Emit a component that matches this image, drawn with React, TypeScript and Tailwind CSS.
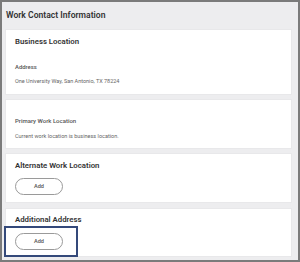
export default function App() {
  const font = { fontFamily: 'Roboto, "Liberation Sans", sans-serif' };

  return (
    <div
      className="w-[300px] h-[262px] border-2 border-[#7b7b7b] bg-[#ededef] flex flex-col overflow-hidden"
      style={font}
    >
      {/* Header */}
      <div className="h-[27px] flex items-center pl-[4px] text-[8.6px] font-semibold text-[#333]">
        Work Contact Information
      </div>

      <div className="flex flex-col pl-[3px] pr-[6px]">
        {/* Business Location */}
        <div className="h-[66px] bg-white border border-[#e8e8ea] pl-[9px] pt-[7px]">
          <div className="text-[7.8px] leading-[10px] font-semibold text-[#333]">Business Location</div>
          <div className="mt-[16px] text-[5.9px] leading-[8px] font-medium text-[#555]">Address</div>
          <div className="mt-[6px] text-[5.5px] leading-[8px] text-[#666]">
            One University Way, San Antonio, TX 78224
          </div>
        </div>

        {/* Primary Work Location */}
        <div className="mt-[4px] h-[50px] bg-white border border-[#e8e8ea] pl-[9px] pt-[17px]">
          <div className="text-[6px] leading-[8px] font-medium text-[#555]">Primary Work Location</div>
          <div className="mt-[7px] text-[5.5px] leading-[8px] text-[#666]">
            Current work location is business location.
          </div>
        </div>

        {/* Alternate Work Location */}
        <div className="mt-[4px] h-[50px] bg-white border border-[#e8e8ea] pl-[9px] pt-[7px]">
          <div className="text-[7.8px] leading-[10px] font-semibold text-[#333]">Alternate Work Location</div>
          <button className="mt-[7px] w-[48px] h-[17px] rounded-full border border-[#9a9a9a] bg-white text-[5.6px] font-medium text-[#555] flex items-center justify-center">
            Add
          </button>
        </div>

        {/* Additional Address */}
        <div className="relative mt-[5px] h-[49px] bg-white border border-[#e8e8ea] pl-[9px] pt-[6px]">
          <div className="text-[7.8px] leading-[10px] font-semibold text-[#333]">Additional Address</div>
          <button className="mt-[8px] w-[48px] h-[17px] rounded-full border border-[#9a9a9a] bg-white text-[5.6px] font-medium text-[#555] flex items-center justify-center">
            Add
          </button>
          <div className="absolute left-[-2px] top-[17px] w-[74px] h-[31px] border-2 border-[#34497a] pointer-events-none" />
        </div>
      </div>
    </div>
  );
}
